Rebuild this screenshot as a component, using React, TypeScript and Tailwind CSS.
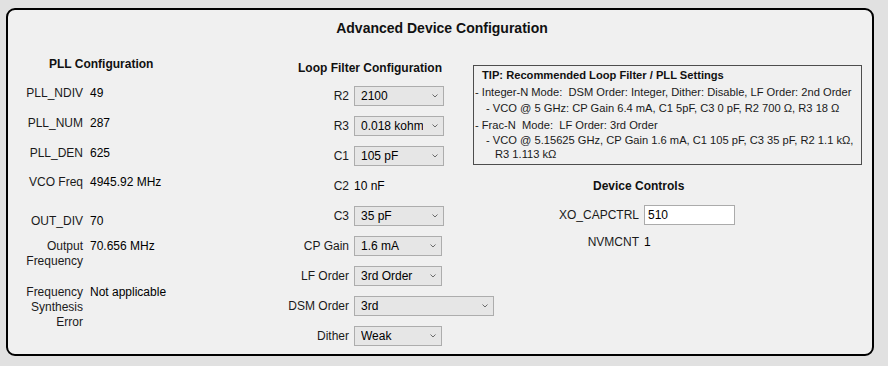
import React from 'react';

const Chevron = () => (
  <svg width="6" height="4" viewBox="0 0 6 4" className="absolute right-[6px] top-[8px] pointer-events-none">
    <polyline points="0.5,0.5 3,3 5.5,0.5" fill="none" stroke="#6b6b6b" strokeWidth="1" />
  </svg>
);

interface DropProps {
  value: string;
  options: string[];
  width: string;
}

const Drop: React.FC<DropProps> = ({ value, options, width }) => (
  <div className={`relative h-5 shrink-0 ${width}`}>
    <select
      defaultValue={value}
      className="appearance-none w-full h-5 pl-[6px] pr-5 bg-[#e6e6e6] border border-[#adadad] text-[12px] leading-[18px] text-black outline-none"
    >
      {options.map((o) => (
        <option key={o}>{o}</option>
      ))}
    </select>
    <Chevron />
  </div>
);

const PllRow = ({ label, value, className = '' }: { label: React.ReactNode; value: string; className?: string }) => (
  <div className={`flex gap-[7px] ${className}`}>
    <div className="w-[75px] shrink-0 text-right text-[#1a1a1a]">{label}</div>
    <div className="text-black">{value}</div>
  </div>
);

const LoopRow = ({ label, children }: { label: string; children: React.ReactNode }) => (
  <div className="flex items-center gap-[5px] h-5">
    <div className="w-[75px] shrink-0 text-right text-[#1a1a1a]">{label}</div>
    {children}
  </div>
);

export default function App() {
  return (
    <div className="w-[888px] h-[366px] bg-[#e1e1e1] pt-2 pl-[6px] font-['Liberation_Sans',Arial,sans-serif] text-[12px] leading-[15px]">
      <div className="w-[868px] h-[348px] bg-[#f0f0f0] border-2 border-black rounded-[9px]">
        {/* Title */}
        <div className="pt-[10px] text-center text-[14px] leading-[16px] font-bold text-[#111] pl-[4px]">
          Advanced Device Configuration
        </div>

        <div className="flex">
          {/* PLL Configuration */}
          <div className="w-[266px] shrink-0 flex flex-col">
            <div className="mt-[21px] pl-[41px] font-bold text-[#111]">PLL Configuration</div>
            <PllRow className="mt-[14px]" label="PLL_NDIV" value="49" />
            <PllRow className="mt-[15px]" label="PLL_NUM" value="287" />
            <PllRow className="mt-[15px]" label="PLL_DEN" value="625" />
            <PllRow className="mt-[14px]" label="VCO Freq" value="4945.92 MHz" />
            <PllRow className="mt-[24px]" label="OUT_DIV" value="70" />
            <PllRow className="mt-[10px]" label={<>Output<br />Frequency</>} value="70.656 MHz" />
            <PllRow className="mt-[16px]" label={<>Frequency<br />Synthesis<br />Error</>} value="Not applicable" />
          </div>

          {/* Loop Filter Configuration */}
          <div className="w-[199px] shrink-0 flex flex-col gap-[10px]">
            <div className="mt-[25px] pl-[24px] font-bold text-[#111]">Loop Filter Configuration</div>
            <LoopRow label="R2">
              <Drop value="2100" options={['700', '1100', '2100']} width="w-[90px]" />
            </LoopRow>
            <LoopRow label="R3">
              <Drop value="0.018 kohm" options={['0.018 kohm', '1.113 kohm']} width="w-[90px]" />
            </LoopRow>
            <LoopRow label="C1">
              <Drop value="105 pF" options={['5 pF', '105 pF']} width="w-[90px]" />
            </LoopRow>
            <LoopRow label="C2">
              <span className="text-black">10 nF</span>
            </LoopRow>
            <LoopRow label="C3">
              <Drop value="35 pF" options={['0 pF', '35 pF']} width="w-[90px]" />
            </LoopRow>
            <LoopRow label="CP Gain">
              <Drop value="1.6 mA" options={['1.6 mA', '6.4 mA']} width="w-[88px]" />
            </LoopRow>
            <LoopRow label="LF Order">
              <Drop value="3rd Order" options={['2nd Order', '3rd Order']} width="w-[88px]" />
            </LoopRow>
            <LoopRow label="DSM Order">
              <Drop value="3rd" options={['Integer', '1st', '2nd', '3rd']} width="w-[140px]" />
            </LoopRow>
            <LoopRow label="Dither">
              <Drop value="Weak" options={['Disable', 'Weak', 'Strong']} width="w-[88px]" />
            </LoopRow>
          </div>

          {/* Right side */}
          <div className="flex-1 flex flex-col">
            <div className="mt-[29px] w-[389px] h-[100px] border border-[#4d4d4d] pt-[2px] text-[11.15px] leading-[14px] text-[#1a1a1a] flex flex-col gap-[2.5px]">
              <div className="pl-[8px] font-bold text-[#111]">TIP: Recommended Loop Filter / PLL Settings</div>
              <div className="pl-[1px]">- Integer-N Mode:&nbsp; DSM Order: Integer, Dither: Disable, LF Order: 2nd Order</div>
              <div className="pl-[12px]">- VCO @ 5 GHz: CP Gain 6.4 mA, C1 5pF, C3 0 pF, R2 700 Ω, R3 18 Ω</div>
              <div className="pl-[1px]">- Frac-N&nbsp; Mode:&nbsp; LF Order: 3rd Order</div>
              <div className="pl-[12px] leading-[13.5px]">
                - VCO @ 5.15625 GHz, CP Gain 1.6 mA, C1 105 pF, C3 35 pF, R2 1.1 kΩ,
                <br />
                <span className="pl-[9px]">R3 1.113 kΩ</span>
              </div>
            </div>

            <div className="mt-[14px] pl-[120px] font-bold text-[#111]">Device Controls</div>
            <div className="mt-[11px] flex items-center gap-[5px] h-5">
              <div className="w-[166px] shrink-0 text-right text-[#1a1a1a]">XO_CAPCTRL</div>
              <input
                defaultValue="510"
                className="w-[91px] h-5 border border-[#ababab] bg-white px-[3px] text-[12px] text-black outline-none"
              />
            </div>
            <div className="mt-[10px] flex gap-[5px]">
              <div className="w-[166px] shrink-0 text-right text-[#1a1a1a]">NVMCNT</div>
              <div className="text-black">1</div>
            </div>
          </div>
        </div>
      </div>
    </div>
  );
}
